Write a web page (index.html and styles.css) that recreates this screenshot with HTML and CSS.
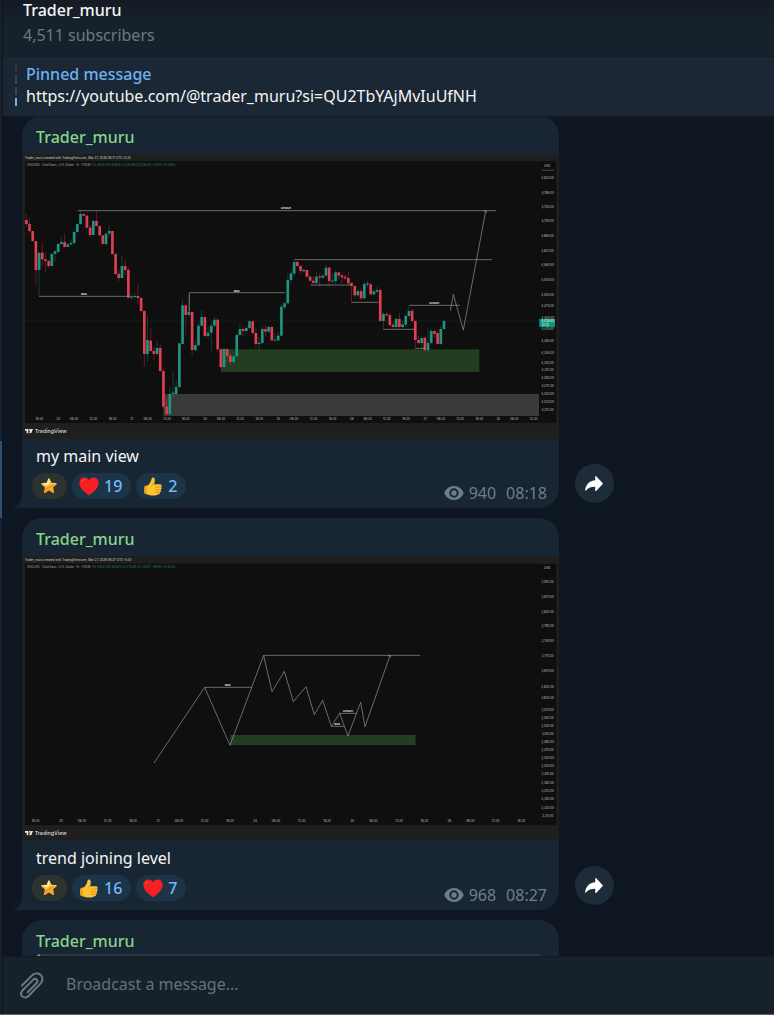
FILE: index.html
```
<!DOCTYPE html>
<html lang="en">
<head>
    <meta charset="UTF-8">
    <meta name="viewport" content="width=device-width, initial-scale=1.0">
    <title>Trader_muru</title>
    <link rel="stylesheet" href="styles.css">
</head>
<body>
    <!-- Shared icons -->
    <svg class="icon-defs" aria-hidden="true">
        <defs>
            <linearGradient id="gold" x1="0" y1="0" x2="0" y2="1">
                <stop offset="0" stop-color="#ffe27a"/>
                <stop offset="1" stop-color="#f59a12"/>
            </linearGradient>
        </defs>
        <symbol id="icon-star" viewBox="0 0 16 16">
            <path fill="url(#gold)" d="M7.2.8c.4-.8 1.1-.8 1.5 0l1.7 3.9 4.5.3c.9.1 1.1.8.5 1.4l-3.300 2.900 1 4.700c.2.9-.5 1.300-1.200.9L8 12.500l-3.900 2.400c-.7.500-1.400 0-1.200-.9l1-4.600L.600 6.400C0 5.800.200 5.100 1 5l4.500-.3z"/>
            <path fill="#fff0a8" d="M1.500 5.700l4.400-.4L8 1.500l.4 4-2.600 2z"/>
            <path fill="#e8860c" d="M4.300 13.600l1.200-4.200 3-1.900 6-1.900-3.400 3.600-4.800 1.900z" opacity=".6"/>
        </symbol>
        <symbol id="icon-heart" viewBox="0 0 18 17">
            <path fill="#f71f24" d="M9 16.500C7.800 15 .3 11.200.3 5.300.3 2.500 2.300.5 4.800.5 6.600.5 8.200 1.400 9 3c.8-1.600 2.400-2.500 4.200-2.500 2.500 0 4.500 2 4.500 4.800 0 5.900-7.500 9.700-8.700 11.200z"/>
            <path fill="#ff5450" d="M2.300 3.800C2.800 2.300 4.100 1.700 5.500 2 3.800 2.500 3 3.600 2.600 5.300z"/>
        </symbol>
        <symbol id="icon-thumb" viewBox="0 0 19 20">
            <path fill="#fdc231" d="M8.100 1.200C8.600-.1 11 .2 11.300 2.200c.3 1.800-.1 3.400-.6 5.300h6.200c2 0 2.400 2.300 1 3 1.100.7.900 2.400-.4 2.800.8.8.5 2.300-.7 2.600.6 1-.1 2.300-1.400 2.300-1.500.9-3.300 1.400-5.600 1.400-2.700 0-4.400-.4-5.800-1.100L.9 17.600C.1 15 .1 12 .9 9.400l3-.5c2.100-1.800 3.600-4.400 4.200-7.700z"/>
            <path fill="none" stroke="#d98e16" stroke-width=".9" stroke-linecap="round" d="M12.500 10.500h5M12.200 13.400h5M12.200 16h4.200M10.700 7.500c-.9.2-1.700.5-2.200 1.100"/>
            <path fill="#f0a41f" d="M.9 9.400L3.500 9c-.8 2.700-.8 5.800.4 9.400l-3-.8C.1 15 .1 12 .9 9.400z"/>
        </symbol>
        <symbol id="icon-eye" viewBox="0 0 20 14">
            <path fill="currentColor" fill-rule="evenodd" d="M10 0c4.500 0 8.300 2.900 9.700 7-1.400 4.100-5.200 7-9.700 7S1.700 11.100.3 7C1.700 2.900 5.500 0 10 0zm0 2.300a4.700 4.700 0 1 0 0 9.400 4.700 4.700 0 0 0 0-9.400zm0 2a2.700 2.700 0 1 1 0 5.400 2.700 2.700 0 0 1 0-5.400z"/>
        </symbol>
        <symbol id="icon-share" viewBox="0 0 18 16">
            <path fill="currentColor" d="M10.200.7c0-.6.500-.8 1-.4l6.300 6.600c.4.400.4.900 0 1.300l-6.300 6.700c-.5.400-1 .2-1-.4v-3.700C6.300 10.700 3.500 11.600 1 14.500c-.4.500-.9.300-.8-.4C.8 8.600 4.400 4.700 10.200 4.300z"/>
        </symbol>
        <symbol id="icon-clip" viewBox="0 0 24 28">
            <path fill="none" stroke="currentColor" stroke-width="2" stroke-linecap="round" d="M2 13.500L11.800 3.600c2.700-2.700 6.400-3 8.900-.6s2.300 6.200-.4 8.900L8.500 24c-1.900 1.900-4.500 2.100-6.200.4s-1.500-4.200.4-6.100L13 7.900c1.200-1.200 2.700-1.300 3.700-.3s.9 2.500-.3 3.700L7.600 20.200"/>
        </symbol>
        <symbol id="icon-tv" viewBox="0 0 24 14">
            <path fill="currentColor" d="M0 0h10v13H5V5H0zM16.500 0H24l-5.500 13H13z"/>
            <circle fill="currentColor" cx="13.500" cy="2.500" r="2.500"/>
        </symbol>
    </svg>

    <div class="app">
        <div class="sidebar-edge">
            <div class="active-chat"></div>
        </div>

        <main class="chat">
            <header class="chat-header">
                <h1>Trader_muru</h1>
                <p>4,511 subscribers</p>
            </header>

            <div class="pinned">
                <div class="pinned-bars">
                    <span></span>
                    <span></span>
                    <span></span>
                    <span class="current"></span>
                </div>
                <div class="pinned-text">
                    <h2>Pinned message</h2>
                    <p>https://youtube.com/@trader_muru?si=QU2TbYAjMvIuUfNH</p>
                </div>
            </div>

            <div class="messages">
                <div class="message">
                    <article class="bubble">
                        <h3 class="sender">Trader_muru</h3>
                        <svg class="photo" id="chart-main" viewBox="6 12 1611 855" role="img" aria-label="Gold chart, main view">
                            <rect class="frame" x="6" y="12" width="1611" height="855"/>
                            <rect class="panel" x="15" y="33" width="1594" height="786"/>
                            <text class="created" x="14" y="27">Trader_muru created with TradingView.com, Mar 27, 2026 08:17 UTC+5:30</text>
                            <text class="symbol" x="21" y="48">XAUUSD · Gold Spot / U.S. Dollar · 1h · FXCM</text>
                            <text class="ohlc" x="215" y="48">O4,415.51 H4,439.19 L4,415.09 C4,438.40 +21.87 (+0.49%)</text>
                            <rect class="unit" x="1559" y="38" width="48" height="16"/>
                            <text class="axis" x="1572" y="50">USD</text>
                            <path class="faint" d="M1564 61h38"/>
                            <rect class="demand" x="603" y="598" width="775" height="68"/>
                            <rect class="block" x="430" y="732" width="1127" height="66"/>
                            <path class="price-line" d="M15 513H1557"/>
                            <g class="candles"></g>
                            <g class="level">
                                <path d="M173 182H1427M823 329H1415M57 439H330M508 428H795M508 428V485M871 405H995M995 457H1075M1090 538H1185M1168 466H1320M1186 595H1215"/>
                                <path d="M1291 482L1300 433L1330 540L1397 183M1391 184L1397 182L1400 188"/>
                            </g>
                            <g class="tag">
                                <text x="798" y="178">CHOCH</text>
                                <text x="192" y="436">BOS</text>
                                <text x="650" y="425">BOS</text>
                                <text x="1243" y="463">CHOCH</text>
                            </g>
                            <g class="prices"></g>
                            <g class="times"></g>
                            <rect class="last-price" x="1558" y="507" width="47" height="24"/>
                            <text class="last-text" x="1583" y="517">4,438.40</text>
                            <text class="last-text" x="1576" y="528">12:31</text>
                            <use href="#icon-tv" x="15" y="837" width="24" height="14" class="brand"/>
                            <text class="brand" x="44" y="850">TradingView</text>
                        </svg>
                        <p class="caption">my main view</p>
                        <div class="bubble-footer">
                            <div class="reactions">
                                <button class="reaction star" aria-label="Star"><svg class="emoji-star"><use href="#icon-star"/></svg></button>
                                <button class="reaction"><svg class="emoji"><use href="#icon-heart"/></svg>19</button>
                                <button class="reaction"><svg class="emoji"><use href="#icon-thumb"/></svg>2</button>
                            </div>
                            <div class="meta">
                                <svg class="eye"><use href="#icon-eye"/></svg>
                                <span>940</span>
                                <time>08:18</time>
                            </div>
                        </div>
                        <svg class="tail" viewBox="0 0 8 14"><path d="M8 0v14H1C-1 14 0 13 1 12.500C5 10.500 8 7 8 0z"/></svg>
                    </article>
                    <button class="share" aria-label="Share"><svg><use href="#icon-share"/></svg></button>
                </div>

                <div class="message">
                    <article class="bubble">
                        <h3 class="sender">Trader_muru</h3>
                        <svg class="photo" id="chart-trend" viewBox="6 18 1611 855" role="img" aria-label="Trend joining level sketch">
                            <rect class="frame" x="6" y="18" width="1611" height="855"/>
                            <rect class="panel" x="15" y="41" width="1594" height="784"/>
                            <text class="created" x="14" y="33">Trader_muru created with TradingView.com, Mar 27, 2026 08:27 UTC+5:30</text>
                            <text class="symbol" x="21" y="54">XAUUSD · Gold Spot / U.S. Dollar · 1h · FXCM</text>
                            <text class="ohlc" x="215" y="54">O4,415.51 H4,440.83 L4,415.09 C4,435.17 +18.65 (+0.42%)</text>
                            <rect class="unit" x="1559" y="44" width="48" height="18"/>
                            <text class="axis" x="1572" y="56">USD</text>
                            <rect class="demand" x="630" y="555" width="557" height="30"/>
                            <g class="level">
                                <path d="M402 639L554 412L630 586L731 316L756 425L793 364L820 455L858 410L883 494L908 451L934 529L959 490L984 558L1022 457L1035 530L1110 317M1104 318L1110 316L1113 322"/>
                                <path d="M554 412H696M731 316H1200M934 529H973M959 490H1010"/>
                            </g>
                            <g class="tag">
                                <text x="623" y="408">BOS</text>
                                <text x="984" y="486">CHOCH</text>
                                <text x="952" y="526">BOS</text>
                            </g>
                            <g class="prices"></g>
                            <g class="times"></g>
                            <use href="#icon-tv" x="15" y="843" width="24" height="14" class="brand"/>
                            <text class="brand" x="44" y="856">TradingView</text>
                        </svg>
                        <p class="caption">trend joining level</p>
                        <div class="bubble-footer">
                            <div class="reactions">
                                <button class="reaction star" aria-label="Star"><svg class="emoji-star"><use href="#icon-star"/></svg></button>
                                <button class="reaction"><svg class="emoji"><use href="#icon-thumb"/></svg>16</button>
                                <button class="reaction"><svg class="emoji"><use href="#icon-heart"/></svg>7</button>
                            </div>
                            <div class="meta">
                                <svg class="eye"><use href="#icon-eye"/></svg>
                                <span>968</span>
                                <time>08:27</time>
                            </div>
                        </div>
                        <svg class="tail" viewBox="0 0 8 14"><path d="M8 0v14H1C-1 14 0 13 1 12.500C5 10.500 8 7 8 0z"/></svg>
                    </article>
                    <button class="share" aria-label="Share"><svg><use href="#icon-share"/></svg></button>
                </div>

                <div class="message">
                    <article class="bubble">
                        <h3 class="sender">Trader_muru</h3>
                        <div class="reply-preview"></div>
                    </article>
                </div>
            </div>

            <form class="composer">
                <button type="button" class="attach" aria-label="Attach file"><svg><use href="#icon-clip"/></svg></button>
                <input type="text" aria-label="Message" placeholder="Broadcast a message...">
            </form>
        </main>
    </div>

    <script src="charts.js"></script>
</body>
</html>
```

FILE: styles.css
```
* {
    margin: 0;
    padding: 0;
    box-sizing: border-box;
}

body {
    font-family: "Noto Sans", "Open Sans", sans-serif;
    font-size: 16px;
    line-height: 20px;
    background: #0e1621;
    color: #f5f5f5;
}

h1, h2, h3 {
    font-size: 16px;
    font-weight: 500;
}

button {
    font: inherit;
    color: inherit;
    background: none;
    border: none;
    cursor: pointer;
}

.icon-defs {
    position: absolute;
    width: 0;
    height: 0;
}

.app {
    display: flex;
    height: 100vh;
    overflow: hidden;
    border-bottom: 1px solid #56606a;
}

/* Edge of the chat list, with the selected chat showing */
.sidebar-edge {
    flex: none;
    width: 3px;
    background: #17212b;
    border-right: 1px solid #0d141d;
}

.active-chat {
    height: 77px;
    margin-top: 441px;
    background: #2b5278;
}

.chat {
    flex: 1;
    min-width: 0;
    display: flex;
    flex-direction: column;
}

.chat-header {
    flex: none;
    height: 57px;
    padding-left: 20px;
    background: linear-gradient(#141b24, #17212b 24px);
    border-bottom: 1px solid #151e28;
}

.chat-header p {
    margin-top: 5px;
    color: #6c7883;
}

/* Pinned message */
.pinned {
    position: relative;
    z-index: 1;
    flex: none;
    display: flex;
    gap: 9px;
    padding: 7px 12px 10px;
    background: #1b2734;
    box-shadow: 0 1px 0 #121b26;
}

.pinned-bars {
    display: flex;
    flex-direction: column;
    gap: 3px;
    width: 2px;
}

.pinned-bars span {
    flex: 1;
    background: #2f4a64;
}

.pinned-bars span:first-child {
    background: #263a4c;
}

.pinned-bars .current {
    background: #6ab3f3;
}

.pinned h2 {
    margin-bottom: 2px;
    color: #6bb2f2;
}

.pinned-text {
    min-width: 0;
}

/* Messages */
.messages {
    flex: 1;
    min-height: 0;
    overflow: hidden;
    padding-left: 19px;
    display: flex;
    flex-direction: column;
    gap: 10px;
}

.message {
    flex: none;
    display: flex;
    align-items: flex-end;
    gap: 16px;
    padding-right: 16px;
}

.bubble {
    position: relative;
    flex: 0 1 537px;
    background: #182533;
    border-radius: 20px 20px 20px 0;
}

.tail {
    position: absolute;
    left: -8px;
    bottom: 0;
    width: 8px;
    height: 14px;
    fill: #182533;
}

.sender {
    padding: 11px 14px 7px;
    color: #85d68b;
}

.caption {
    padding: 7px 14px 0;
}

.bubble-footer {
    display: flex;
    justify-content: space-between;
    align-items: flex-end;
    padding: 7px 12px 5px 10px;
}

.reactions {
    display: flex;
    gap: 5px;
    margin-bottom: 4px;
}

.reaction {
    display: flex;
    align-items: center;
    gap: 5px;
    height: 26px;
    padding: 0 9px 0 7px;
    border-radius: 13px;
    background: #1c3448;
    color: #73b9f5;
    font-weight: 500;
}

.reaction.star {
    width: 35px;
    padding: 0 2px 0 0;
    justify-content: center;
    background: #2d332e;
}

.emoji {
    width: 20px;
    height: 19px;
}

.emoji-star {
    width: 16px;
    height: 16px;
}

.meta {
    display: flex;
    align-items: center;
    color: #6d7f8f;
}

.eye {
    width: 20px;
    height: 14px;
    margin-right: 5px;
}

.meta time {
    margin-left: 10px;
}

.share {
    flex: none;
    width: 39px;
    height: 39px;
    margin-bottom: 5px;
    padding-right: 1px;
    border-radius: 50%;
    background: #1e2c3a;
    color: #fff;
    display: flex;
    align-items: center;
    justify-content: center;
}

.share svg {
    width: 18px;
    height: 16px;
}

.reply-preview {
    height: 46px;
    margin: -4px 16px 12px 14px;
    background: #263b42;
    border-left: 3px solid #85d68b;
    border-radius: 5px;
}

/* Chart pictures */
.photo {
    display: block;
    width: 100%;
    height: auto;
    font-family: Inter, "Open Sans", sans-serif;
    font-size: 9px;
}

.frame { fill: #1f1f1f; }
.panel { fill: #0f0f0f; }
.created { fill: #d5d5d5; font-size: 9px; }
.symbol { fill: #a8a8a8; font-size: 9px; }
.ohlc { fill: #16917f; font-size: 9px; }
.unit { fill: #0a0a0a; stroke: #222; }
.axis, .prices, .times { fill: #c4c4c4; }
.prices, .times, .tag, .last-text { text-anchor: middle; }
.tag { fill: #eee; font-size: 8px; font-weight: 700; }
.faint { stroke: #666; stroke-width: 2; }
.demand { fill: #223d22; }
.block { fill: #3a3a3a; }
.price-line { stroke: #10241f; stroke-width: 2; }
.level { fill: none; stroke: #9a9a9a; stroke-width: 2; }
.candles .up { fill: #1f9480; stroke: #1f9480; }
.candles .down { fill: #e23d50; stroke: #e23d50; }
.candles path { stroke-opacity: 0.55; }
.candles rect { stroke: none; }
.last-price { fill: #089981; }
.last-text { fill: #fff; }
text.brand { fill: #dcdcdc; font-size: 16px; font-weight: 500; }
use.brand { color: #e6e6e6; }

/* Composer */
.composer {
    flex: none;
    display: flex;
    align-items: center;
    height: 58px;
    padding: 0 16px 0 17px;
    gap: 22px;
    background: #17212b;
    border-top: 1px solid #121a24;
}

.attach {
    width: 24px;
    height: 28px;
    color: #6c7883;
}

.attach svg {
    display: block;
    width: 24px;
    height: 28px;
}

.composer input {
    flex: 1;
    min-width: 0;
    padding-bottom: 4px;
    font: inherit;
    color: #f5f5f5;
    background: none;
    border: none;
    outline: none;
}

.composer input::placeholder {
    color: #64717d;
    opacity: 1;
}
```

FILE: charts.js
```
const SVG_NS = 'http://www.w3.org/2000/svg';

// [open, close, high, low] as heights on the chart, top is 0
const candles = [
    [210, 222, 192, 230], [222, 243, 205, 250], [243, 273, 243, 275], [273, 360, 273, 410],
    [360, 308, 305, 438], [308, 328, 278, 350], [328, 333, 310, 365], [333, 348, 330, 355],
    [348, 312, 308, 350], [312, 304, 300, 335], [306, 282, 280, 308], [282, 276, 262, 285],
    [276, 291, 250, 292], [291, 283, 280, 292], [283, 279, 270, 285], [279, 246, 240, 285],
    [246, 222, 220, 250], [222, 192, 182, 225], [192, 197, 188, 200], [197, 233, 195, 236],
    [233, 255, 225, 262], [255, 213, 210, 256], [213, 228, 182, 230], [228, 256, 226, 258],
    [256, 282, 254, 284], [282, 251, 248, 288], [251, 243, 225, 260], [243, 312, 242, 314],
    [312, 372, 308, 374], [371, 384, 358, 395], [384, 348, 315, 384], [348, 360, 330, 375],
    [360, 443, 352, 446], [443, 439, 432, 450], [441, 438, 430, 446], [438, 444, 402, 460],
    [444, 483, 440, 488], [483, 612, 480, 650], [612, 570, 500, 635], [572, 603, 535, 605],
    [603, 612, 590, 630], [612, 594, 575, 615], [594, 663, 583, 665], [663, 770, 660, 775],
    [770, 792, 745, 797], [792, 732, 710, 794], [732, 728, 665, 745], [732, 711, 690, 735],
    [711, 580, 578, 713], [582, 466, 450, 585], [466, 495, 460, 555], [495, 486, 430, 500],
    [486, 600, 484, 615], [600, 585, 570, 604], [586, 527, 520, 588], [527, 501, 480, 530],
    [501, 558, 500, 562], [558, 548, 530, 565], [548, 527, 515, 603], [527, 509, 500, 530],
    [509, 598, 505, 605], [598, 651, 592, 655], [651, 597, 592, 655], [597, 618, 595, 636],
    [617, 636, 610, 645], [636, 619, 615, 640], [619, 555, 548, 621], [555, 537, 520, 560],
    [537, 543, 530, 560], [543, 534, 528, 550], [534, 514, 508, 536], [514, 549, 510, 552],
    [549, 582, 532, 595], [582, 578, 560, 605], [579, 537, 528, 582], [537, 545, 525, 560],
    [545, 531, 526, 548], [531, 571, 528, 574], [571, 569, 550, 574], [571, 557, 545, 573],
    [557, 470, 462, 560], [472, 460, 455, 478], [460, 390, 370, 462], [390, 370, 366, 400],
    [371, 336, 330, 380], [336, 348, 332, 352], [348, 363, 346, 372], [364, 360, 355, 368],
    [360, 380, 358, 384], [380, 392, 376, 396], [392, 399, 378, 402], [399, 380, 365, 402],
    [379, 383, 370, 410], [383, 377, 372, 388], [377, 353, 345, 380], [353, 393, 350, 410],
    [394, 392, 370, 400], [393, 367, 360, 403], [367, 377, 365, 388], [376, 382, 370, 400],
    [380, 385, 372, 390], [384, 400, 365, 404], [399, 408, 396, 457], [408, 436, 405, 442],
    [436, 423, 418, 440], [423, 445, 414, 450], [445, 402, 396, 448], [404, 400, 392, 412],
    [403, 433, 398, 436], [433, 424, 416, 438], [425, 420, 410, 430], [420, 513, 416, 516],
    [513, 492, 485, 538], [492, 496, 484, 500], [495, 525, 490, 530], [524, 531, 516, 536],
    [531, 507, 503, 536], [507, 531, 490, 538], [531, 523, 512, 534], [524, 498, 492, 530],
    [498, 483, 466, 502], [482, 513, 476, 518], [513, 570, 508, 595], [570, 579, 556, 584],
    [579, 564, 560, 594], [563, 600, 560, 602], [600, 579, 535, 606], [579, 543, 536, 582],
    [543, 552, 540, 564], [549, 582, 545, 585], [582, 537, 530, 585], [537, 513, 510, 540]
];

const mainPrices = [
    [88, '4,825.00'], [131, '4,785.00'], [173, '4,745.00'], [217, '4,705.00'], [261, '4,665.00'],
    [305, '4,625.00'], [349, '4,585.00'], [393, '4,545.00'], [438, '4,505.00'], [472, '4,475.00'],
    [506, '4,445.00'], [541, '4,415.00'], [576, '4,385.00'], [611, '4,355.00'], [641, '4,330.00'],
    [664, '4,310.00'], [688, '4,290.00'], [712, '4,270.00'], [736, '4,250.00'], [760, '4,230.00'],
    [784, '4,210.00']
];

const mainTimes = [
    [58, '18:30'], [115, '20'], [162, '06:30'], [220, '12:30'], [278, '18:30'], [335, '21'],
    [383, '06:30'], [441, '12:30'], [497, '18:30'], [555, '24'], [603, '06:30'], [660, '12:30'],
    [718, '18:30'], [775, '25'], [822, '06:30'], [881, '12:30'], [938, '18:30'], [995, '26'],
    [1043, '06:30'], [1100, '12:30'], [1158, '18:30'], [1216, '27'], [1263, '06:30'],
    [1320, '12:30'], [1378, '18:30'], [1435, '30'], [1483, '06:30'], [1541, '12:30']
];

const trendPrices = [
    [100, '3,910.00'], [144, '3,870.00'], [188, '3,830.00'], [232, '3,790.00'], [277, '3,750.00'],
    [322, '3,710.00'], [367, '3,670.00'], [414, '3,630.00'], [448, '3,600.00'], [484, '3,570.00'],
    [508, '3,550.00'], [531, '3,530.00'], [555, '3,510.00'], [579, '3,490.00'], [603, '3,470.00'],
    [628, '3,450.00'], [652, '3,430.00'], [676, '3,410.00'], [701, '3,390.00'], [727, '3,370.00'],
    [751, '3,350.00'], [777, '3,330.00'], [801, '3,311.00']
];

const trendTimes = [
    [47, '18:30'], [123, '20'], [186, '06:30'], [263, '12:30'], [339, '18:30'], [414, '21'],
    [477, '06:30'], [554, '12:30'], [630, '18:30'], [705, '24'], [768, '06:30'], [845, '12:30'],
    [921, '18:30'], [997, '25'], [1060, '06:30'], [1137, '12:30'], [1213, '18:30'], [1288, '26'],
    [1351, '06:30'], [1427, '12:30'], [1504, '18:30']
];

function add(parent, name, attrs, text) {
    const el = document.createElementNS(SVG_NS, name);
    for (const key in attrs) {
        el.setAttribute(key, attrs[key]);
    }
    if (text) {
        el.textContent = text;
    }
    parent.appendChild(el);
    return el;
}

function drawCandles(group) {
    candles.forEach(([open, close, high, low], i) => {
        const x = 19 + i * 9.565;
        const top = Math.min(open, close);
        const g = add(group, 'g', { class: close > open ? 'down' : 'up' });
        add(g, 'path', { d: `M${x} ${high}V${low}`, 'stroke-width': 2 });
        add(g, 'rect', { x: x - 4, y: top, width: 8, height: Math.max(3, Math.abs(close - open)) });
    });
}

function drawAxes(chart, prices, times, timeY) {
    const priceGroup = chart.querySelector('.prices');
    const timeGroup = chart.querySelector('.times');
    prices.forEach(([y, label]) => add(priceGroup, 'text', { x: 1583, y: y }, label));
    times.forEach(([x, label]) => add(timeGroup, 'text', { x: x, y: timeY }, label));
}

const mainChart = document.getElementById('chart-main');
const trendChart = document.getElementById('chart-trend');

drawCandles(mainChart.querySelector('.candles'));
drawAxes(mainChart, mainPrices, mainTimes, 811);
drawAxes(trendChart, trendPrices, trendTimes, 817);
```
